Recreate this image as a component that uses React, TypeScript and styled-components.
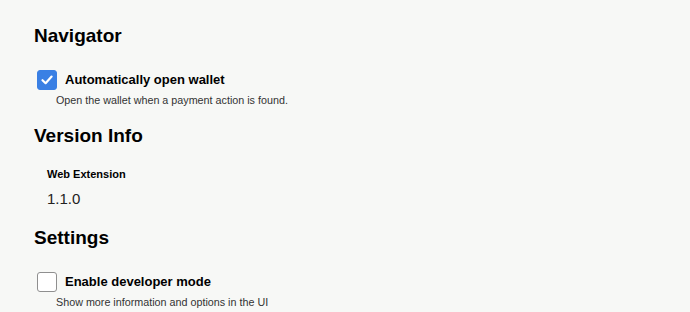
import React from 'react';
import styled, { createGlobalStyle } from 'styled-components';

type Option = {
  label: string;
  description: string;
  checked: boolean;
};

const GlobalStyle = createGlobalStyle`
  body {
    margin: 0;
    background: #f7f8f6;
    font-family: 'Liberation Sans', Arial, sans-serif;
    color: #111;
  }
`;

export default function App(): JSX.Element {
  return (
    <Page>
      <GlobalStyle />
      <Section>
        <Title>Navigator</Title>
        <CheckOption
          option={{
            label: 'Automatically open wallet',
            description: 'Open the wallet when a payment action is found.',
            checked: true,
          }}
        />
      </Section>
      <Section>
        <Title>Version Info</Title>
        <InfoBlock>
          <InfoLabel>Web Extension</InfoLabel>
          <InfoValue>1.1.0</InfoValue>
        </InfoBlock>
      </Section>
      <Section>
        <Title>Settings</Title>
        <CheckOption
          option={{
            label: 'Enable developer mode',
            description: 'Show more information and options in the UI',
            checked: false,
          }}
        />
      </Section>
    </Page>
  );
}

function CheckOption({ option }: { option: Option }): JSX.Element {
  const { label, description, checked } = option;
  return (
    <OptionBlock>
      <OptionRow>
        <Box checked={checked}>
          {checked && (
            <svg width="14" height="14" viewBox="0 0 14 14">
              <path
                d="M2.5 7.2 L5.6 10.2 L11.6 3.6"
                fill="none"
                stroke="#fff"
                strokeWidth="2.2"
                strokeLinecap="round"
                strokeLinejoin="round"
              />
            </svg>
          )}
        </Box>
        <OptionLabel>{label}</OptionLabel>
      </OptionRow>
      <OptionDescription>{description}</OptionDescription>
    </OptionBlock>
  );
}

const Page = styled.main`
  padding: 24px 0 0 34px;
  display: flex;
  flex-direction: column;
  gap: 17px;
`;

const Section = styled.section`
  display: flex;
  flex-direction: column;
`;

const Title = styled.h2`
  margin: 0;
  font-size: 19px;
  line-height: 24px;
  font-weight: 700;
  color: #000;
`;

const OptionBlock = styled.div`
  margin-top: 22px;
  padding-left: 3px;
`;

const OptionRow = styled.label`
  display: flex;
  align-items: center;
  gap: 8px;
`;

const Box = styled.span<{ checked: boolean }>`
  box-sizing: border-box;
  width: 20px;
  height: 20px;
  border-radius: 3px;
  display: flex;
  align-items: center;
  justify-content: center;
  background: ${(p) => (p.checked ? '#3a80e4' : '#fff')};
  border: 1px solid ${(p) => (p.checked ? '#3a80e4' : '#8f8f8f')};
`;

const OptionLabel = styled.span`
  font-size: 13px;
  line-height: 16px;
  font-weight: 700;
  color: #000;
`;

const OptionDescription = styled.p`
  margin: 4px 0 0 19px;
  font-size: 10.75px;
  line-height: 13px;
  color: #333;
`;

const InfoBlock = styled.div`
  margin: 20px 0 2px;
  padding-left: 13px;
  display: flex;
  flex-direction: column;
  gap: 9px;
`;

const InfoLabel = styled.div`
  font-size: 11px;
  line-height: 13px;
  font-weight: 700;
  color: #000;
`;

const InfoValue = styled.div`
  font-size: 15px;
  line-height: 17px;
  color: #222;
`;
